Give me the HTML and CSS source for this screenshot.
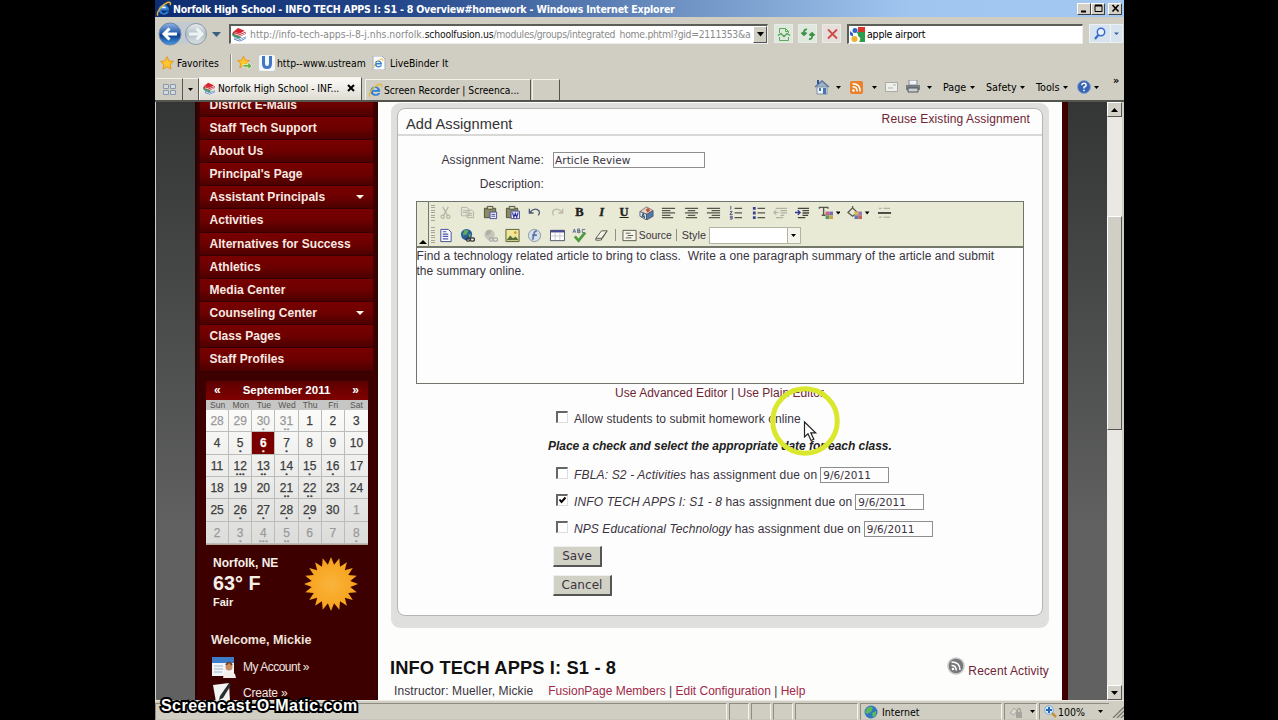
FILE: index.html
```html
<!DOCTYPE html>
<html lang="en">
<head>
<meta charset="utf-8">
<title>Norfolk High School</title>
<link rel="stylesheet" href="styles.css">
</head>
<body>
<svg class="defs" width="0" height="0">
  <defs>
    <linearGradient id="blueBall" x1="0" y1="0" x2="0" y2="1"><stop offset="0" stop-color="#8fb4e6"/><stop offset=".45" stop-color="#2a5fae"/><stop offset=".55" stop-color="#0c3f8f"/><stop offset="1" stop-color="#4a9be8"/></linearGradient>
    <linearGradient id="greyBall" x1="0" y1="0" x2="0" y2="1"><stop offset="0" stop-color="#e8ecef"/><stop offset=".5" stop-color="#b4c0c8"/><stop offset="1" stop-color="#d8e0e2"/></linearGradient>
    <radialGradient id="sunFill"><stop offset="0" stop-color="#f9b43c"/><stop offset="1" stop-color="#f6a11a"/></radialGradient>
    <symbol id="ie" viewBox="0 0 16 16"><path d="M13 9.4H5.2c.2 3 4.300 3.300 5.300 1.200h2.600C11 15.400 2.600 14.500 2.600 8.600 2.600 2 13.300 1.800 13 9.400z" fill="#2f7fd6"/><path d="M5.300 7.300h5c-.4-2.400-4.500-2.400-5 0z" fill="#e6f2fc"/><path d="M2 14.500C-.5 12 6 3.500 11.500 1.500c3-1 3.500.8 2.600 2.700" fill="none" stroke="#e8b730" stroke-width="1.400"/></symbol>
    <symbol id="books" viewBox="0 0 16 16"><path d="M2 5l5-4 7 3-5 3z" fill="#d8252f"/><path d="M1 6q-1 3 1 4l6 2.500 3-1.500-7-3V6z" fill="#3f9a6e"/><path d="M2 5c-1 1.500-.5 2.500.5 3L9 10l6-2.500V5L9 7.500z" fill="#c32430"/><path d="M3 11l6 2 6-3v2.500L9 15.500 3 13.500z" fill="#3f71b8"/><path d="M3 7.200l6 1.800 5.500-2.300M3.500 12.200l5.500 2 5.500-2.700" stroke="#fff" fill="none"/></symbol>
    <symbol id="star" viewBox="0 0 16 16"><path d="M8 .8l2.200 4.800 5.200.6-3.900 3.600 1.100 5.200L8 12.400 3.400 15l1.100-5.200L.6 6.200l5.200-.6z" fill="#fcc62c" stroke="#e39118"/></symbol>
  </defs>
</svg>
<div class="window">
  <header class="titlebar">
    <svg width="16" height="16"><use href="#ie"/></svg>
    <span class="title-text">Norfolk High School - INFO TECH APPS I: S1 - 8 Overview#homework - Windows Internet Explorer</span>
    <div class="win-buttons">
      <i class="win-btn"><svg width="13" height="11"><path d="M3 8.500h5" stroke="#000" stroke-width="2"/></svg></i>
      <i class="win-btn"><svg width="13" height="11"><path d="M3 2.500h7v6H3z" fill="none" stroke="#000"/><path d="M3 2.500h7" stroke="#000" stroke-width="2"/></svg></i>
      <i class="win-btn close"><svg width="13" height="11"><path d="M3.500 2l6 6.500M9.500 2l-6 6.500" stroke="#000" stroke-width="1.600"/></svg></i>
    </div>
  </header>

  <div class="address-row">
    <svg class="nav-arrows" width="66" height="28" viewBox="0 0 66 28">
      <rect x="8" y="2" width="42" height="22" rx="10" fill="#c3cbd2"/>
      <circle cx="14" cy="14" r="11" fill="url(#blueBall)" stroke="#6f88ab"/>
      <path d="M8 14h13M13.500 8.500L8 14l5.500 5.500" fill="none" stroke="#fff" stroke-width="3"/>
      <circle cx="40" cy="14" r="10.500" fill="url(#greyBall)" stroke="#8d9ba3"/>
      <path d="M33 14h13M40.500 8.500L46 14l-5.500 5.500" fill="none" stroke="#eef4f4" stroke-width="3"/>
      <path d="M56 12h9l-4.500 5z" fill="#39607f"/>
    </svg>
    <div class="url-box">
      <svg width="16" height="15"><use href="#books"/></svg>
      <span class="url-text">http://info-tech-apps-i-8-j.nhs.norfolk.<b>schoolfusion.us</b><span class="path">/modules/groups/integrated_home.phtml?gid=2111353&amp;a</span></span>
      <i class="drop"><svg width="9" height="5"><path d="M1 0h7L4.500 4.500z"/></svg></i>
    </div>
    <i class="tool-btn"><svg width="14" height="14" fill="none" stroke="#5aa95c"><path d="M2.500 6V1.500h6l3 3V6M2.500 10v3.500h9V10M8.500 1.500v3h3"/><path d="M1 8.500l3-2 3 3 3-3 3 2" stroke="#49a052" stroke-width="1.300"/></svg></i>
    <i class="tool-btn"><svg width="16" height="14" fill="none" stroke="#3b9144" stroke-width="1.800"><path d="M7 2.500C4 2 3.500 5 4 7M1.500 5.500L4 8l2.500-2.500M9 12c3 .5 3.500-2 3-5M9.500 8.500L12 6l2.500 2.500"/></svg></i>
    <i class="tool-btn stop"><svg width="14" height="14"><path d="M3 2.500l9 9M12 2.500l-9 9" stroke="#cf4a44" stroke-width="1.800"/></svg></i>
    <div class="search-box">
      <svg width="15" height="15"><path d="M0 0h8v7H0z" fill="#f6fafc"/><path d="M8 0h7v6H8z" fill="#d8352b"/><path d="M7 5h8v10H9q3-4-1-6z" fill="#2c9d48"/><path d="M0 7h8v8H0z" fill="#f6fafc"/><circle cx="4.500" cy="12" r="3" fill="#efb32b"/><circle cx="5" cy="3.500" r="2.500" fill="#2c62c2"/><path d="M0 4l3 2.500v3L0 8z" fill="#2c62c2"/></svg>
      <span>apple airport</span>
    </div>
    <div class="search-go">
      <svg width="20" height="18"><circle cx="11" cy="7" r="3.700" fill="#eaf3ff" stroke="#3c69cf" stroke-width="1.500"/><path d="M8.300 10L5 14" stroke="#3c69cf" stroke-width="2.200"/></svg>
      <svg class="go-drop" width="12" height="18"><path d="M3 7.500h5L5.500 10z" fill="#3a5aa0"/></svg>
    </div>
  </div>

  <div class="fav-row">
    <svg width="14" height="14"><use href="#star"/></svg>
    <span class="fav-label">Favorites</span>
    <i class="vsep"></i>
    <svg width="16" height="15"><use href="#star" width="13" height="14"/><path d="M6 9.500h5V7l4 4-4 3.500V12H6z" fill="#5fb444" stroke="#fff" stroke-width=".6"/></svg>
    <svg class="u-icon" width="16" height="16"><rect width="16" height="16" rx="2" fill="#f3f7fb"/><path d="M4.500 1v7.500q0 4 3.500 4t3.500-4V1" fill="none" stroke="#4377bf" stroke-width="3"/></svg>
    <span class="fav-a">http--www.ustream</span>
    <svg class="page-ie" width="14" height="14"><path d="M1 0h9l3 3v11H1z" fill="#fafcfd" stroke="#aab"/><use href="#ie" x="1" y="2" width="11" height="11"/></svg>
    <span class="fav-b">LiveBinder It</span>
  </div>

  <div class="tab-row">
    <i class="quick"><svg width="15" height="14" fill="#d4dae2" stroke="#8b98a8"><path d="M1.500 1.500h5v4h-5zM8.500 1.500h5v4h-5zM1.500 7.500h5v4h-5zM8.500 7.500h5v4h-5z"/></svg></i>
    <i class="quick-drop"><svg width="6" height="4"><path d="M0 0h5L2.500 3z"/></svg></i>
    <div class="tab active">
      <svg width="14" height="13" viewBox="0 0 16 16"><use href="#books"/></svg>
      <span class="tab-text">Norfolk High School - INF...</span>
      <svg class="tab-x" width="8" height="8"><path d="M1 1l6 6M7 1L1 7" stroke="#000" stroke-width="2"/></svg>
    </div>
    <div class="tab">
      <svg width="15" height="15"><use href="#ie"/></svg>
      <span class="tab-text2">Screen Recorder | Screenca...</span>
    </div>
    <div class="tab new"></div>
    <div class="command-bar">
      <svg width="16" height="16"><path d="M1 8l7-6 7 6" fill="#9db3c9" stroke="#5c7796" stroke-width="1.500"/><path d="M3 8h10v7H3z" fill="#eef2f5" stroke="#7b8ea3"/><path d="M5 9h2v3H5zM9 9h3v6H9z" fill="#4574b5"/><path d="M3 1h2v4H3z" fill="#3355a0"/></svg>
      <svg class="dd" width="5" height="3"><path d="M0 0h5L2.500 3z"/></svg>
      <svg class="rss" width="13" height="13"><rect width="13" height="13" rx="2" fill="#e9802a"/><circle cx="3.500" cy="9.500" r="1.300" fill="#fff"/><path d="M2.500 5.800q4.700 0 4.700 4.700M2.500 2.800q7.700 0 7.700 7.700" fill="none" stroke="#fff" stroke-width="1.400"/></svg>
      <svg class="dd2" width="5" height="3"><path d="M0 0h5L2.500 3z"/></svg>
      <svg class="mail" width="13" height="10"><path d="M.5.500h12v9H.5z" fill="#eeeeea" stroke="#aaa9a2"/><path d="M8 3h3M3 6h5" stroke="#b5b4ac"/></svg>
      <svg class="print" width="16" height="14"><path d="M4 0h8v5H4z" fill="#f3f3f3" stroke="#889"/><path d="M1 5h14v5H1z" fill="#777d84"/><path d="M3 8h10v4H3z" fill="#c9d1d6" stroke="#555"/></svg>
      <svg class="dd3" width="5" height="3"><path d="M0 0h5L2.500 3z"/></svg>
      <span class="cmd c1">Page</span><svg width="5" height="3"><path d="M0 0h5L2.500 3z"/></svg>
      <span class="cmd c2">Safety</span><svg width="5" height="3"><path d="M0 0h5L2.500 3z"/></svg>
      <span class="cmd c3">Tools</span><svg width="5" height="3"><path d="M0 0h5L2.500 3z"/></svg>
      <svg class="help" width="14" height="14"><circle cx="7" cy="7" r="6.500" fill="#3865b3" stroke="#8ba6cf"/><path d="M4.800 5.300q.2-2 2.200-2t2.200 1.800Q9.200 6.500 7 7.300V8.500M7 9.700v1.600" fill="none" stroke="#fff" stroke-width="1.500"/></svg>
      <svg width="5" height="3"><path d="M0 0h5L2.500 3z"/></svg>
      <span class="more">»</span>
    </div>
  </div>

  <div class="viewport">
    <div class="gutter left"></div>
    <aside class="sidebar">
      <ul class="menu">
        <li>District E-Mails</li><li>Staff Tech Support</li><li>About Us</li><li>Principal's Page</li>
        <li>Assistant Principals<svg width="8" height="4"><path d="M0 0h8L4 4z" fill="#fff5e6"/></svg></li>
        <li>Activities</li><li>Alternatives for Success</li><li>Athletics</li><li>Media Center</li>
        <li>Counseling Center<svg width="8" height="4"><path d="M0 0h8L4 4z" fill="#fff5e6"/></svg></li>
        <li>Class Pages</li><li>Staff Profiles</li>
      </ul>
      <div class="calendar">
        <div class="cal-head"><span>«</span><span class="month">September 2011</span><span>»</span></div>
        <div class="cal-days"><span>Sun</span><span>Mon</span><span>Tue</span><span>Wed</span><span>Thu</span><span>Fri</span><span>Sat</span></div>
        <div class="cal-grid">
          <span class="out">28</span><span class="out">29</span><span class="out">30<i>•</i></span><span class="out">31<i>••</i></span><span>1</span><span>2</span><span>3</span>
          <span>4</span><span>5<i>•</i></span><span class="today">6<i>•</i></span><span>7<i>•</i></span><span>8</span><span>9</span><span>10</span>
          <span>11</span><span>12<i>•••</i></span><span>13<i>••</i></span><span>14<i>•</i></span><span>15<i>•</i></span><span>16<i>•</i></span><span>17</span>
          <span>18</span><span>19</span><span>20</span><span>21<i>••</i></span><span>22<i>••</i></span><span>23</span><span>24</span>
          <span>25</span><span>26<i>•</i></span><span>27<i>•</i></span><span>28<i>•</i></span><span>29<i>•</i></span><span>30</span><span class="out">1</span>
          <span class="out">2</span><span class="out">3<i>•</i></span><span class="out">4<i>•••</i></span><span class="out">5<i>••</i></span><span class="out">6</span><span class="out">7</span><span class="out">8<i>•</i></span>
        </div>
      </div>
      <div class="weather">
        <div><div class="city">Norfolk, NE</div><div class="temp">63° F</div><div class="sky">Fair</div></div>
        <svg width="54" height="54" viewBox="-27 -27 54 54"><path fill="url(#sunFill)" d="M0-27L3.100-19.300 8.300-25.700 9-17.200 15.900-21.800 13.800-13.800 21.800-15.900 17.200-9 25.700-8.300 19.300-3.100 27 0 19.300 3.100 25.700 8.300 17.200 9 21.800 15.900 13.800 13.800 15.900 21.800 9 17.200 8.300 25.700 3.100 19.300 0 27-3.100 19.300-8.300 25.700-9 17.200-15.900 21.800-13.800 13.800-21.800 15.900-17.200 9-25.700 8.300-19.300 3.100-27 0-19.300-3.100-25.700-8.300-17.200-9-21.800-15.900-13.800-13.800-15.900-21.800-9-17.200-8.300-25.700-3.100-19.300z"/></svg>
      </div>
      <div class="welcome">Welcome, Mickie</div>
      <div class="acct"><svg width="24" height="22"><path d="M0 0h22v19H0z" fill="#f2f5f8"/><path d="M0 0h22v6H0z" fill="#3d7cc9"/><path d="M2 9h9M2 12h9M2 15h8" stroke="#9fb5cc"/><circle cx="17" cy="10" r="3.500" fill="#c98b62"/><path d="M12 17q5-5 11 0l1 4H11z" fill="#f4efe8"/><path d="M14 8q3-5 6 0" stroke="#70452a" stroke-width="2" fill="none"/></svg><span>My Account »</span></div>
      <div class="acct create"><svg width="24" height="20"><path d="M1 3l16-2 1 19H4z" fill="#f3f3f1"/><path d="M17 1L8 14l-1 4 4-2 8-13z" fill="#272c31"/></svg><span>Create »</span></div>
    </aside>

    <main class="content">
      <section class="card">
        <div class="card-inner">
          <div class="card-head"><h2>Add Assignment</h2><a>Reuse Existing Assignment</a></div>
          <div class="field"><label>Assignment Name:</label><div class="text-input">Article Review</div></div>
          <div class="field desc"><label>Description:</label></div>
          <div class="editor">
            <div class="toolbar">
              <i class="collapse"><svg width="8" height="4"><path d="M0 4h8L4 0z"/></svg></i>
              <div class="tool-rows">
                <div class="tool-row">
                  <i class="grip"></i>
                  <svg viewBox="0 0 16 16" fill="none" stroke="#b4b4a8" stroke-width="1.300"><path d="M5 2l5 9M11 2L6 11"/><circle cx="5" cy="12.500" r="1.800"/><circle cx="11" cy="12.500" r="1.800"/></svg>
                  <svg viewBox="0 0 16 16" fill="#e6e6d8" stroke="#b2b2a4"><path d="M1.500 2.500h6l2 2v7h-8zM7.500 5.500h5l2 2v6h-7z"/><path d="M3 6h4M3 8h4M9 9h4M9 11h4"/></svg>
                  <svg viewBox="0 0 16 16"><path d="M1.500 3.500h12v10h-12z" fill="#8a8b60" stroke="#4c4f3c"/><path d="M4.500 1.500h6v3h-6z" fill="#d7d7b6" stroke="#4c4f3c"/><path d="M7.500 7.500h7v7h-7z" fill="#eef" stroke="#454b98"/><path d="M9 10h4M9 12h4" stroke="#454b98"/></svg>
                  <svg viewBox="0 0 16 16"><path d="M1.500 3.500h12v10h-12z" fill="#8a8b60" stroke="#4c4f3c"/><path d="M4.500 1.500h6v3h-6z" fill="#d7d7b6" stroke="#4c4f3c"/><path d="M6.500 6.500h9v8h-9z" fill="#eef" stroke="#454b98"/><path d="M8 8l1.500 5L11 9l1.500 4L14 8" fill="none" stroke="#2d3494" stroke-width="1.200"/></svg>
                  <svg viewBox="0 0 16 16" fill="none" stroke="#4d5876" stroke-width="1.400"><path d="M2.500 4v4.500H7M3 8q4-5 8-3t1 6"/></svg>
                  <svg viewBox="0 0 16 16" fill="none" stroke="#b9b9ac" stroke-width="1.400"><path d="M13.500 4v4.500H9M13 8Q9 3 5 5t-1 6"/></svg>
                  <b class="letter">B</b><b class="letter it">I</b><b class="letter un">U</b>
                  <svg viewBox="0 0 16 16"><path d="M1 7l7-5 7 4-6 4z" fill="#e5d3c4" stroke="#777"/><path d="M7 5l3-2 2 3-3 2z" fill="#c0563e"/><path d="M1 7l7 3v6l-7-4z" fill="#d6e2ec" stroke="#667"/><path d="M8 10l7-4v6l-7 4z" fill="#4c79ad" stroke="#556"/><path d="M3 13l1.500-4L6 14M3.500 12L6 13" fill="none" stroke="#245"/></svg>
                  <svg viewBox="0 0 16 16" stroke="#55564c" stroke-width="1.300"><path d="M1 3.500h14M1 6h9M1 8.500h14M1 11h9M1 13.500h12"/></svg>
                  <svg viewBox="0 0 16 16" stroke="#55564c" stroke-width="1.300"><path d="M1 3.500h14M4 6h8M1 8.500h14M4 11h8M2 13.500h12"/></svg>
                  <svg viewBox="0 0 16 16" stroke="#55564c" stroke-width="1.300"><path d="M1 3.500h14M6 6h9M1 8.500h14M6 11h9M3 13.500h12"/></svg>
                  <svg viewBox="0 0 16 16" fill="none" stroke="#55564c" stroke-width="1.300"><path d="M7 3.500h8M7 8.500h8M7 13.500h8"/><path d="M3 1v4M2 7h2.500L2 10h3M2 12h2.500v3H2M2 13.500h2" stroke="#4a5080" stroke-width="1"/></svg>
                  <svg viewBox="0 0 16 16" stroke="#55564c" stroke-width="1.300"><path d="M7 3.500h8M7 8.500h8M7 13.500h8"/><path d="M2 3.500h3M2 8.500h3M2 13.500h3" stroke="#3c4290" stroke-width="3"/></svg>
                  <svg viewBox="0 0 16 16" fill="none" stroke="#b2b2a4" stroke-width="1.300"><path d="M3 3.500h12M8 6h7M8 8.500h7M8 11h4M3 13.500h8M6 8H1M3.500 5.500L1 8l2.500 2.500"/></svg>
                  <svg viewBox="0 0 16 16" fill="none" stroke="#44453d" stroke-width="1.400"><path d="M3 3.500h12M8 6h7M8 8.500h7M8 11h6M3 13.500h8"/><path d="M0 8h5M3 5.500L5.500 8 3 10.500" stroke="#33388a"/></svg>
                  <svg class="wide" viewBox="0 0 24 16"><path d="M1 2.500h10M6 2v9M4 11h4M1.500 2v2M10.500 2v2" stroke="#55564c" stroke-width="1.500" fill="none"/><path d="M8 7h4v4H8z" fill="#c67"/><path d="M12 7h4v4h-4z" fill="#7a6ac0"/><path d="M8 11h4v4H8z" fill="#5a9a6a"/><path d="M12 11h4v4h-4z" fill="#c9a840"/><path d="M19 7h5l-2.500 3z"/></svg>
                  <svg class="wide" viewBox="0 0 24 16"><path d="M1 8l5-5 5 5-5 4zM6 3V1" stroke="#55564c" stroke-width="1.300" fill="#e8e8d5"/><path d="M8 7h4v4H8z" fill="#d9b84c"/><path d="M12 7h4v4h-4z" fill="#9d76b5"/><path d="M8 11h4v4H8z" fill="#6976b0"/><path d="M12 11h4v4h-4z" fill="#c2655e"/><path d="M19 7h5l-2.500 3z"/></svg>
                  <svg class="rule" viewBox="0 0 16 16" stroke="#a0a093"><path d="M2 3.500h3M7 3.500h7M2 13h3M7 13h7"/><path d="M1 8.500h14" stroke="#44453d" stroke-width="2"/></svg>
                </div>
                <div class="tool-row second">
                  <i class="grip"></i>
                  <svg viewBox="0 0 16 16"><path d="M3 1.500h8l3 3v10H3z" fill="#fff" stroke="#3b4594"/><path d="M5 4h4M5 6.500h6M5 9h6M5 11.500h6" stroke="#4d58a8" stroke-width="1.300"/></svg>
                  <svg viewBox="0 0 16 16"><circle cx="7" cy="7" r="6" fill="#2b5f9c"/><path d="M4 3q3-2 5 0L7 7 3 8zM9 6l3 1-2 4z" fill="#5cae5b"/><rect x="6.500" y="10.500" width="4.500" height="3.500" rx="1.700" fill="none" stroke="#333" stroke-width="1.300"/><rect x="11" y="10.500" width="4.500" height="3.500" rx="1.700" fill="none" stroke="#333" stroke-width="1.300"/></svg>
                  <svg viewBox="0 0 16 16"><circle cx="7" cy="7" r="5.500" fill="#c5c5ba"/><path d="M4 3q3-2 5 0L7 7 3 8z" fill="#aeaea3"/><rect x="6.500" y="10.500" width="4.500" height="3.500" rx="1.700" fill="none" stroke="#aaa" stroke-width="1.300"/><rect x="11" y="10.500" width="4.500" height="3.500" rx="1.700" fill="none" stroke="#aaa" stroke-width="1.300"/></svg>
                  <svg viewBox="0 0 16 16"><path d="M1 1.500h14v13H1z" fill="#f1e79a" stroke="#555c3c"/><path d="M1.500 13l4-5 3 3 3-2 3 4z" fill="#596f3a"/><circle cx="11" cy="5" r="1.500" fill="#d99b2a"/></svg>
                  <svg viewBox="0 0 16 16"><circle cx="8" cy="8" r="6.500" fill="#d5e0ea" stroke="#8794a8"/><path d="M10.500 3.500Q8 3 7.500 6L6 12.500M5.500 7.500h5" fill="none" stroke="#5874a4" stroke-width="1.800"/></svg>
                  <svg viewBox="0 0 16 16"><path d="M.5 2.500h15v11H.5z" fill="#fff" stroke="#484c60"/><path d="M.5 3.500h15" stroke="#484c8c" stroke-width="2.500"/><path d="M.5 8.500h15M5.500 5v8M10.500 5v8" stroke="#c4c6cc"/></svg>
                  <svg viewBox="0 0 16 16"><path d="M1 5l1.500-4L4 5M1.500 4h2M6 1v4h2.500V3H6h2V1zM14 1.500h-3v3.300h3" fill="none" stroke="#565c88" stroke-width=".9"/><path d="M3 9l4 4.500L14 5" fill="none" stroke="#4f9b41" stroke-width="3"/></svg>
                  <svg viewBox="0 0 16 16"><path d="M2 11l6-8h6l-5 8-2 2H2z" fill="#f3f3e6" stroke="#55564c"/><path d="M2 11h6l6-8M8 11v2" fill="none" stroke="#55564c"/></svg>
                  <i class="tsep"></i>
                  <svg class="src" viewBox="0 0 16 16"><path d="M1 2.500h14v11H1z" fill="#f5f5ea" stroke="#55564c"/><path d="M4 5.500h5M6 8h6M4 10.500h6" stroke="#55564c"/></svg>
                  <span class="tb-source">Source</span>
                  <i class="tsep s2"></i>
                  <span class="tb-style">Style</span>
                  <div class="combo"><i><svg width="5" height="3"><path d="M0 0h5L2.500 3z"/></svg></i></div>
                </div>
              </div>
            </div>
            <div class="editor-body"><p class="l1">Find a technology related article to bring to class.&nbsp; Write a one paragraph summary of the article and submit</p><p class="l2">the summary online.</p></div>
          </div>
          <div class="editor-links"><a>Use Advanced Editor</a> | <a>Use Plain Editor</a></div>
          <div class="check allow"><i class="box"></i><span class="t-allow">Allow students to submit homework online</span></div>
          <p class="instr">Place a check and select the appropriate date for each class.</p>
          <div class="check"><i class="box"></i><span class="t1"><em>FBLA: S2 - Activities</em> has assignment due on</span><div class="date">9/6/2011</div></div>
          <div class="check"><i class="box"><svg width="9" height="9"><path d="M1.500 3.500l2 2.500 4-4.500" fill="none" stroke="#000" stroke-width="2"/></svg></i><span class="t2"><em>INFO TECH APPS I: S1 - 8</em> has assignment due on</span><div class="date">9/6/2011</div></div>
          <div class="check"><i class="box"></i><span class="t3"><em>NPS Educational Technology</em> has assignment due on</span><div class="date">9/6/2011</div></div>
          <div class="buttons"><div class="btn save">Save</div><div class="btn">Cancel</div></div>
        </div>
      </section>
      <div class="course-head">
        <h1>INFO TECH APPS I: S1 - 8</h1>
        <div class="recent"><svg width="18" height="18"><circle cx="9" cy="9" r="8" fill="#77787a" stroke="#c8c8c8" stroke-width="1.500"/><circle cx="6" cy="12" r="1.300" fill="#fff"/><path d="M4.500 8.500q4.800 0 4.800 5M4.500 5q8.500 0 8.500 8" fill="none" stroke="#fff" stroke-width="1.500"/></svg><a>Recent Activity</a></div>
      </div>
      <div class="course-sub"><span class="instructor">Instructor: Mueller, Mickie</span><span class="course-links"><a>FusionPage Members</a> | <a>Edit Configuration</a> | <a>Help</a></span></div>
    </main>
    <div class="stripe"></div>
    <div class="gutter right"></div>
    <div class="scrollbar">
      <i class="sb-btn"><svg width="7" height="4"><path d="M0 4h7L3.500 0z"/></svg></i>
      <i class="thumb"></i>
      <i class="sb-btn bottom"><svg width="7" height="4"><path d="M0 0h7L3.500 4z"/></svg></i>
    </div>
  </div>

  <footer class="status">
    <i class="cell main"></i><i class="cell s"></i><i class="cell s"></i><i class="cell s"></i><i class="cell l"></i>
    <div class="cell zone"><svg width="14" height="14"><circle cx="7" cy="7" r="6.500" fill="#2f77c2"/><path d="M3 3q4-3 6 0L7 7 3 9 1 7zM8 8l4-2v4l-3 3z" fill="#5cb85a"/></svg><span>Internet</span></div>
    <div class="cell lock"><svg width="15" height="14"><path d="M1 8l4-5 3 3-3 4z" fill="#d9d9d4" stroke="#a8a8a0"/><path d="M7 7h6v6H7z" fill="#a5a59d"/><path d="M8.500 7V4.500q1.500-2 3 0V7" fill="none" stroke="#a5a59d" stroke-width="1.300"/></svg><svg width="5" height="3"><path d="M0 0h5L2.500 3z"/></svg></div>
    <div class="cell zoom"><svg width="13" height="13"><path d="M8 8l4 4" stroke="#c89438" stroke-width="2.500"/><circle cx="5" cy="5" r="4.300" fill="#d9ecfb" stroke="#7ba9d6"/><path d="M5 2v6M2 5h6" stroke="#2467b8" stroke-width="2"/></svg><span>100%</span><svg class="zdd" width="5" height="3"><path d="M0 0h5L2.500 3z"/></svg></div>
    <svg class="resize" width="13" height="13" stroke="#77776f"><path d="M2 13L13 2M6 13l7-7M10 13l3-3" stroke-width="1.300"/></svg>
  </footer>
</div>
<svg class="pointer" width="74" height="74">
  <circle cx="37" cy="37" r="32.300" fill="none" stroke="#d9e82c" stroke-width="5"/>
  <path d="M36.500 38v15l3.500-3.200 3 6.700 2.800-1.300-3-6.400h4.900z" fill="#fff" stroke="#222" stroke-width="1.200"/>
</svg>
<div class="watermark">Screencast-O-Matic.com</div>
</body>
</html>
```
FILE: styles.css
```css
* { box-sizing: border-box; }
body { margin: 0; width: 1278px; height: 720px; overflow: hidden; background: #000; position: relative; font-family: "Liberation Sans", Arial, sans-serif; font-size: 12px; color: #3a3340; }
svg { display: block; flex: none; }
i { font-style: normal; }
p, h1, h2, ul { margin: 0; padding: 0; font-weight: normal; }
.defs { position: absolute; }
.window { margin-left: 155px; width: 969px; height: 720px; background: #d0cec2; display: flex; flex-direction: column; font-family: "DejaVu Sans Condensed", "DejaVu Sans", sans-serif; white-space: nowrap; }

/* title bar */
.titlebar { height: 17px; flex: none; display: flex; align-items: center; padding-left: 1px; background: linear-gradient(90deg, #0e2c70 0, #23478a 25%, #7094c4 55%, #a0c6f0 78%, #a4c8f0 100%); }
.title-text { color: #fff; font-weight: bold; font-size: 10.500px; letter-spacing: -.185px; margin-left: 1px; }
.win-buttons { margin-left: auto; margin-right: 2px; display: flex; }
.win-btn { width: 14px; height: 12px; margin-top: 1px; background: #d4d0c8; border: 1px solid; border-color: #fff #404040 #404040 #fff; display: flex; overflow: hidden; }
.win-btn svg { margin-top: -1px; }
.win-btn.close { margin-left: 3px; }

/* address row */
.address-row { height: 33px; flex: none; display: flex; align-items: center; }
.nav-arrows { margin-left: 1px; }
.url-box { margin-left: 7px; width: 539px; height: 20px; background: #fff; border: 1px solid; border-color: #5d5d58 #eee #eee #5d5d58; border-width: 2px 1px 1px 2px; display: flex; align-items: center; overflow: hidden; }
.url-text { margin-left: 3px; color: #8a8a8a; font-size: 10.350px; width: 502px; overflow: hidden; }
.url-text b { font-weight: normal; color: #111; letter-spacing: -.2px; }
.path { letter-spacing: -.3px; }
.drop { width: 14px; height: 17px; margin-left: auto; background: #d0cdc2; border: 1px solid; border-color: #fff #555 #555 #fff; display: flex; align-items: center; justify-content: center; }
.tool-btn { width: 19px; height: 19px; background: #dfe8dc; border: 1px solid #e9ebe6; margin-left: 5px; display: flex; align-items: center; justify-content: center; }
.tool-btn + .tool-btn { margin-left: 5px; }
.tool-btn.stop { background: #e6dedb; }
.url-box + .tool-btn { margin-left: 6px; }
.search-box { margin-left: 6px; width: 236px; height: 20px; background: #fff; border: 1px solid; border-color: #5d5d58 #eee #eee #5d5d58; border-width: 2px 1px 1px 2px; display: flex; align-items: center; gap: 2px; color: #000; font-size: 10.500px; letter-spacing: -.2px; padding-left: 1px; }
.search-go { display: flex; margin-left: 6px; height: 19px; background: #d7e4ef; border: 1px solid #edf1f4; }
.go-drop { border-left: 1px solid #f2f5f7; }

/* favorites */
.fav-row { height: 25px; flex: none; display: flex; align-items: center; color: #000; font-size: 10.300px; padding-left: 5px; }
.fav-label { margin-left: 3px; width: 42px; }
.vsep { width: 2px; height: 18px; margin: 0 5px 0 11px; border-left: 1px solid #8d8b80; border-right: 1px solid #f4f3ea; }
.u-icon { margin-left: 6px; }
.fav-a { margin-left: 2px; width: 88px; }
.page-ie { margin-left: 7px; }
.fav-b { margin-left: 4px; }

/* tabs */
.tab-row { height: 27px; flex: none; display: flex; align-items: flex-end; border-bottom: 2px solid #55554f; color: #000; font-size: 10.200px; }
.quick { width: 27px; height: 22px; display: flex; align-items: center; justify-content: center; border-right: 1px solid #55554f; border-top: 1px solid #f2f1ea; margin-left: 1px; }
.quick-drop { width: 16px; height: 22px; display: flex; align-items: center; justify-content: center; border-right: 1px solid #55554f; border-top: 1px solid #f2f1ea; }
.tab { height: 21px; width: 166px; display: flex; align-items: center; padding-left: 2px; gap: 1px; border-top: 1px solid #f2f1ea; border-left: 1px solid #f2f1ea; border-right: 1px solid #55554f; margin-left: 3px; }
.tab.active { height: 23px; width: 163px; background: linear-gradient(#fbfaf7, #dedcd2); padding: 0 0 2px 2px; gap: 2px; margin-left: 0; }
.tab-text { width: 123px; }
.tab-x { margin-left: 4px; }
.tab.new { width: 28px; margin-left: 1px; }
.command-bar { display: flex; align-items: center; height: 26px; margin-left: auto; margin-right: 3px; font-size: 10.700px; }
.command-bar .dd { margin-left: 6px; } .rss { margin-left: 9px; } .dd2 { margin-left: 9px; } .mail { margin-left: 8px; } .print { margin-left: 7px; } .dd3 { margin-left: 6px; }
.cmd { margin-right: 4px; } .c1 { margin-left: 11px; width: 23px; } .c2 { margin-left: 11px; width: 30px; } .c3 { margin-left: 11px; width: 23px; }
.help { margin-left: 9px; margin-right: 3px; }
.more { margin-left: 14px; font-weight: bold; margin-top: -13px; width: 8px; }

/* page viewport */
.viewport { height: 598px; flex: none; display: flex; margin-left: 1px; margin-right: 2px; overflow: hidden; background: #fdfdfc; font-family: "Liberation Sans", Arial, sans-serif; }
.gutter { flex: none; background: linear-gradient(#343635 0, #4c4e4d 40%, #606160 72%, #606160 100%); }
.gutter.left { width: 39px; } .gutter.right { width: 39px; }
.stripe { width: 6px; flex: none; background: #3c0000; }
.sidebar { width: 183px; flex: none; background: #3d0000; border-left: 2px solid #240404; border-right: 1px solid #240404; padding-left: 3px; }
.menu { list-style: none; width: 173px; margin-top: -8.500px; }
.menu li { height: 23.180px; display: flex; align-items: center; justify-content: space-between; padding: 0 9px 0 9.500px; color: #f7e9e2; font-weight: bold; font-size: 12px; letter-spacing: .05px; background: linear-gradient(#780000, #6d0000 50%, #4b0000); border-bottom: 1px solid #360000; }

.calendar { margin: 9px 0 0 6px; width: 162px; }
.cal-head { height: 19px; background: linear-gradient(#5c0000, #800000); color: #fff; font-weight: bold; font-size: 12px; display: flex; justify-content: space-between; align-items: center; padding: 0 9px 0 8px; }
.month { font-size: 11.500px; }
.cal-days { height: 10.500px; background: #c6c6c4; color: #555; font-size: 8.500px; line-height: 10.500px; display: grid; grid-template-columns: repeat(7, 1fr); text-align: center; }
.cal-grid { display: grid; grid-template-columns: repeat(7, 1fr); grid-auto-rows: 22.300px; background: linear-gradient(#fbfbfa, #dcdcda); border-bottom: 1px solid #b5a79a; }
.cal-grid span { display: flex; flex-direction: column; align-items: center; padding-top: 4px; font-size: 12px; line-height: 14px; color: #3c3c3c; -webkit-text-stroke: .25px; border-right: 1px solid #bcbcba; border-bottom: 1px solid #bcbcba; }
.cal-grid span:nth-child(7n) { border-right: 0; }
.cal-grid i { font-size: 6px; line-height: 4px; height: 3px; margin-top: -1px; letter-spacing: 1px; margin-right: -1px; -webkit-text-stroke: .5px; }
.cal-grid .out { color: #9a9a9a; }
.cal-grid .today { background: #7a0000; color: #fff; font-weight: bold; }

.weather { display: flex; justify-content: space-between; margin: 10.500px 0 19.500px 6px; width: 158px; padding-left: 7px; color: #f6efe8; font-weight: bold; height: 57px; padding-right: 6px; }
.city { font-size: 12px; line-height: 16px; }
.temp { font-size: 19.800px; line-height: 25px; }
.sky { font-size: 11px; line-height: 12px; }
.weather svg { margin-top: 2px; }
.welcome { color: #eee2da; font-weight: bold; font-size: 12.600px; line-height: 16px; margin-left: 11px; height: 25px; }
.acct { display: flex; margin-left: 12px; gap: 7px; height: 25px; color: #eee6e0; font-size: 12px; letter-spacing: -.5px; line-height: 20px; }
.acct.create { line-height: 22px; letter-spacing: -.2px; }

/* main column */
.content { width: 684px; flex: none; padding-left: 13px; }
.card { margin-top: 1px; width: 658px; height: 525px; background: #dfdfde; border-radius: 9px; padding: 5px 6px 12px; }
.card-inner { background: #fdfdfd; border: 1px solid #b5b5b4; border-radius: 8px; height: 508px; letter-spacing: .07px; }
.card-head { height: 27px; border-bottom: 2px solid #d8d8d6; display: flex; justify-content: space-between; padding: 5px 12px 0 8px; }
h2 { font-size: 14.600px; line-height: 20px; color: #333; }
a { color: #6f2434; }
.card-head a { font-size: 12px; line-height: 10px; letter-spacing: .12px; }
.field { display: flex; align-items: center; height: 24px; margin-top: 12px; }
.field.desc { margin-top: 0; }
label { width: 146px; text-align: right; font-size: 12px; }
.text-input { margin-left: 9px; width: 152px; height: 16px; border: 1px solid #8e8e8e; font: 10.500px/14px "DejaVu Sans", sans-serif; padding-left: 1px; }
.editor { margin: 5px 0 0 18px; width: 608px; height: 183px; border: 1px solid #70756b; }
.toolbar { height: 46px; background: #e9ead5; border-bottom: 2px solid #74786a; display: flex; }
.collapse { width: 12px; border-right: 1px solid #74786a; display: flex; align-items: flex-end; justify-content: center; padding-bottom: 2px; }
.tool-row { display: flex; align-items: center; height: 21px; }
.tool-row.second { height: 23px; padding-top: 1px; }
.grip { width: 4px; height: 16px; margin-left: 2px; margin-right: 3px; background: repeating-linear-gradient(#a5a798 0 1px, #e9ead5 1px 2.500px); }
.tool-row svg { width: 15px; height: 15px; margin-right: 7.330px; }
.tool-row svg.wide { width: 22.500px; margin-right: 7px; }
.tool-row svg.rule { margin-left: 0; }
.letter { width: 15px; margin-right: 7.330px; text-align: center; font: bold 12.500px/15px "Liberation Serif", serif; color: #222; -webkit-text-stroke: .4px; }
.letter.it { font-style: italic; } .letter.un { text-decoration: underline; }
.tsep { width: 1px; height: 12px; background: #8f9184; margin-left: -2px; margin-right: 6px; }
.tool-row .src { margin-right: 2px; }
.tb-source { width: 32px; font-size: 10.400px; } .tb-style { width: 24px; font-size: 10.800px; }
.tsep.s2 { margin-left: 5px; margin-right: 5px; }
.combo { margin-left: 3px; width: 92px; height: 17px; background: #fff; border: 1px solid #b2b4a4; display: flex; justify-content: flex-end; }
.combo i { width: 13px; border-left: 1px solid #b2b4a4; background: #f4f4ea; display: flex; align-items: center; justify-content: center; }
.tool-row .combo svg { width: 5px; height: 3px; margin: 0; }
.editor-body { font-size: 12px; line-height: 15px; padding-top: 1px; margin-left: -.5px; }
.l2 { letter-spacing: 0; }
.editor-links { margin-left: 217px; font-size: 12px; line-height: 18px; letter-spacing: .03px; }
.check { display: flex; align-items: center; height: 27px; margin-left: 158px; font-size: 12px; }
.check.allow { height: 26px; margin-top: 4px; }
.box { width: 12px; height: 12px; border: 1px solid; border-color: #666 #ddd #ddd #666; border-width: 2px 1px 1px 2px; background: #fff; margin-right: 6px; margin-top: -4px; }
.t-allow { letter-spacing: .08px; } .t1 { letter-spacing: .16px; } .t2 { letter-spacing: .13px; } .t3 { letter-spacing: .09px; }
.date { margin-left: 3px; width: 69px; height: 16px; border: 1px solid #8e8e8e; font: 10.500px/14px "DejaVu Sans", sans-serif; padding-left: 2px; }
.instr { margin-left: 150px; font-size: 12px; font-weight: bold; font-style: italic; color: #222; line-height: 29px; margin-bottom: .5px; letter-spacing: -.04px; }
.buttons { margin: 3.500px 0 0 155px; display: flex; flex-direction: column; align-items: flex-start; gap: 8px; }
.btn { width: 59px; height: 21px; background: #d2d1c6; border: 1px solid; border-color: #eee #555 #555 #eee; border-width: 1px 2px 2px 1px; font: 12px/19px "DejaVu Sans", sans-serif; text-align: center; }
.btn.save { width: 49px; }
.course-head { display: flex; justify-content: space-between; padding-right: 13px; margin: 29px 0 0 -1px; height: 25px; }
h1 { font-size: 18.300px; letter-spacing: .14px; font-weight: bold; color: #111; line-height: 22px; }
.recent { display: flex; gap: 3px; line-height: 28px; font-size: 12px; letter-spacing: .13px; }
.course-sub { display: flex; padding-left: 3px; font-size: 12px; line-height: 19px; }
.instructor { letter-spacing: .12px; }
.course-links { margin-left: 15px; } .course-links a { color: #a02848; }

.scrollbar { width: 16px; flex: none; background: #e9e8e3; display: flex; flex-direction: column; }
.sb-btn { width: 15px; height: 15px; background: #d4d2c8; border: 1px solid; border-color: #fff #555 #555 #fff; display: flex; align-items: center; justify-content: center; }
.thumb { width: 15px; height: 214px; margin-top: 99px; background: #d1cfc5; border: 1px solid; border-color: #fff #555 #555 #fff; }
.sb-btn.bottom { margin-top: auto; }

/* status bar */
.status { flex: 1; display: flex; align-items: center; padding-top: 2px; border-top: 1px solid #eceae2; color: #000; font-size: 10.500px; }
.cell { height: 17px; border: 1px solid; border-color: #8e8c82 #f5f4ee #c8c6ba #8e8c82; margin-right: 2px; display: flex; align-items: center; flex: none; }
.main { width: 572px; } .s { width: 20px; } .l { width: 63px; }
.zone { width: 142px; padding-left: 3px; gap: 4px; } .lock { width: 33px; padding-left: 4px; gap: 6px; } .zoom { width: 70px; padding-left: 4px; gap: 1px; border-right: 0; }
.zdd { margin-left: 12px; }
.resize { margin-left: auto; }

/* overlays */
.pointer { position: absolute; left: 768px; top: 384px; }
.watermark { position: absolute; left: 161px; top: 697px; font: bold 16px/18px "Liberation Sans", Arial, sans-serif; letter-spacing: .45px; color: #fff; -webkit-text-stroke: 4px #000; paint-order: stroke fill; }
```
